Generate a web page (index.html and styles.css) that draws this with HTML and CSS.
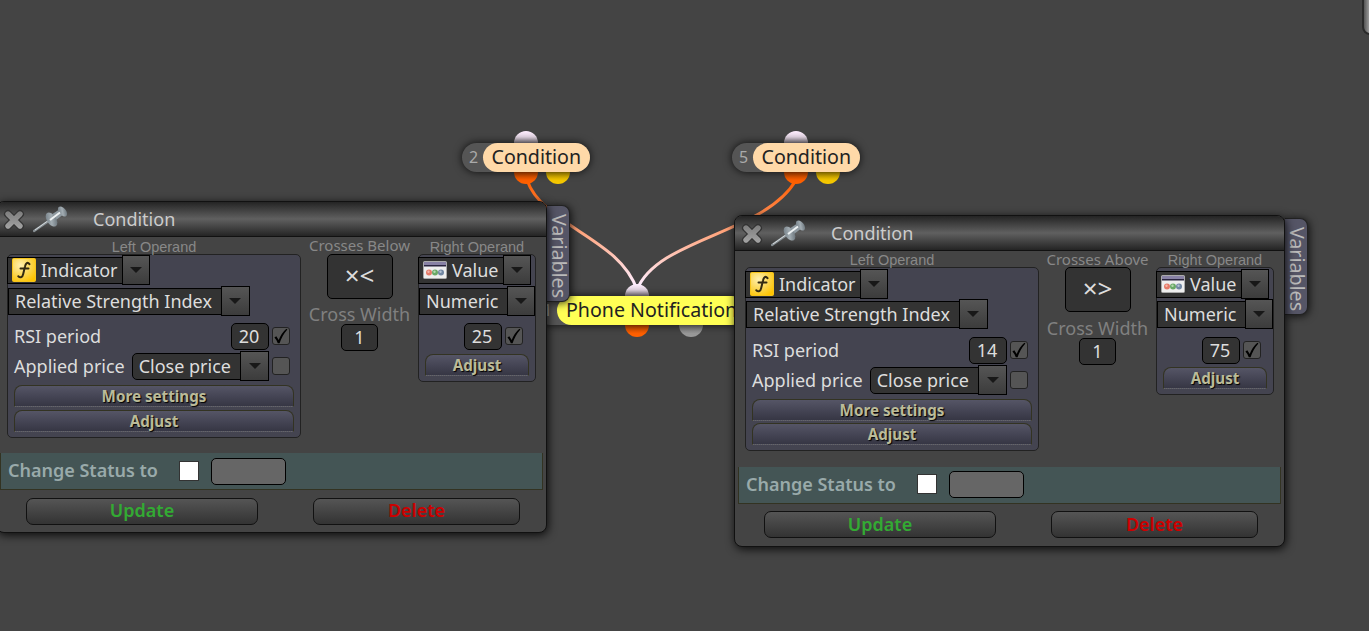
FILE: index.html
```html
<!DOCTYPE html>
<html>
<head>
    <meta charset="utf-8">
    <title>Conditions</title>
    <link rel="stylesheet" href="styles.css">
</head>
<body>
    <svg class="defs" width="0" height="0">
        <defs>
            <radialGradient id="yellow" cx=".35" cy=".3" r=".8">
                <stop offset="0" stop-color="#fff0b0"/>
                <stop offset=".55" stop-color="#fbd650"/>
                <stop offset="1" stop-color="#ffc400"/>
            </radialGradient>
            <linearGradient id="metal" x1="0" y1="0" x2="1" y2="1">
                <stop offset="0" stop-color="#69747c"/>
                <stop offset=".5" stop-color="#a2acb2"/>
                <stop offset="1" stop-color="#59636a"/>
            </linearGradient>
            <linearGradient id="cross" x1="0" y1="0" x2="0" y2="24" gradientUnits="userSpaceOnUse">
                <stop offset="0" stop-color="#777"/>
                <stop offset="1" stop-color="#aaa"/>
            </linearGradient>
            <symbol id="close" viewBox="0 0 24 24">
                <path d="M6 6L18 18M18 6L6 18" stroke="#333" stroke-width="8" stroke-linecap="round"/>
                <path d="M6 6L18 18M18 6L6 18" stroke="url(#cross)" stroke-width="5.4" stroke-linecap="round"/>
            </symbol>
            <symbol id="pin" viewBox="0 0 36 28">
                <path d="M1 26L17 15" stroke="#899196" stroke-width="2.2" stroke-linecap="round"/>
                <path d="M2 25L17 14.4" stroke="#d5dadc" stroke-width="1"/>
                <path d="M18 10L27 4L31 9L23 15Z" fill="#8f9aa1"/>
                <ellipse cx="18.5" cy="14.5" rx="4.6" ry="7.8" transform="rotate(-35 18.5 14.5)" fill="url(#metal)"/>
                <ellipse cx="29.5" cy="6.5" rx="3.4" ry="5.8" transform="rotate(-40 29.5 6.5)" fill="url(#metal)"/>
                <path d="M17 15L27 7.5" stroke="#eef2f3" stroke-width="2"/>
            </symbol>
            <symbol id="func" viewBox="0 0 24 24">
                <rect x=".5" y=".5" width="23" height="23" rx="1" fill="url(#yellow)" stroke="#f6c41c"/>
                <path d="M17.5 6.2C15.5 3.6 13.7 5.2 13 8.5L11.2 16C10.5 19.3 8.4 20.4 6.3 18.2M8.5 10.5H16.5" fill="none" stroke="#332a12" stroke-width="2" stroke-linecap="round"/>
            </symbol>
            <symbol id="value" viewBox="0 0 24 18">
                <rect x=".5" y=".5" width="23" height="17" rx="1" fill="#eee" stroke="#aaa"/>
                <rect x="1" y="1" width="22" height="3" fill="#8881a5"/>
                <rect x="1" y="4" width="22" height="1.5" fill="#2a2540"/>
                <circle cx="6" cy="11.5" r="3" fill="#e57a68"/>
                <circle cx="12" cy="11.5" r="3" fill="#69a866"/>
                <circle cx="18" cy="11.5" r="3" fill="#7187a3"/>
                <circle cx="5.5" cy="10.8" r="1.2" fill="#f5b5aa"/>
                <circle cx="11.5" cy="10.8" r="1.2" fill="#b4d8b0"/>
                <circle cx="17.5" cy="10.8" r="1.2" fill="#b5c3d4"/>
            </symbol>
            <symbol id="check" viewBox="0 0 16 16">
                <path d="M1.4 9.5L3.3 8.3L5.7 12Q8.5 5 13.4 .8L14.4 1.4Q9 7.5 6.6 15.3H4.8Q3.7 11.8 1.4 9.5Z" fill="#000"/>
            </symbol>
        </defs>
    </svg>

    <svg class="wires" width="1369" height="631">
        <defs>
            <linearGradient id="wire" gradientUnits="userSpaceOnUse" x1="0" y1="185" x2="0" y2="285">
                <stop offset="0" stop-color="#ff6208"/>
                <stop offset="1" stop-color="#ffeeff"/>
            </linearGradient>
        </defs>
        <path d="M527 180C543 226 620 238 637 290"/>
        <path d="M796 180C765 234 657 238 637 290"/>
    </svg>

    <div class="node node-left">
        <span class="ball top"></span><span class="ball out"></span><span class="ball out no"></span>
        <div class="pill"><span class="num">2</span><span class="name">Condition</span></div>
    </div>
    <div class="node node-right">
        <span class="ball top"></span><span class="ball out"></span><span class="ball out no"></span>
        <div class="pill"><span class="num">5</span><span class="name">Condition</span></div>
    </div>
    <div class="node node-phone">
        <span class="ball top"></span><span class="ball out"></span><span class="ball out off"></span>
        <div class="pill"><span class="num">1</span><span class="name">Phone Notification</span></div>
    </div>

    <div class="window window-left">
        <div class="tab">Variables</div>
        <div class="frame">
            <div class="header">
                <svg class="close"><use href="#close"/></svg>
                <svg class="pin"><use href="#pin"/></svg>
                <span>Condition</span>
            </div>
            <div class="operands">
                <div class="col left">
                    <div class="label">Left Operand</div>
                    <div class="box">
                        <div class="select kind"><span class="text"><svg class="func"><use href="#func"/></svg>Indicator</span><span class="arrow"></span></div>
                        <div class="select"><span class="text">Relative Strength Index</span><span class="arrow"></span></div>
                        <div class="row first"><span>RSI period</span><span class="input">20</span><span class="tick"><svg><use href="#check"/></svg></span></div>
                        <div class="row"><span>Applied price</span><div class="select price"><span class="text">Close price</span><span class="arrow"></span></div><span class="tick"></span></div>
                        <div class="bar more">More settings</div>
                        <div class="bar">Adjust</div>
                    </div>
                </div>
                <div class="col middle">
                    <div class="label">Crosses Below</div>
                    <div class="operator">×&lt;</div>
                    <div class="cross">Cross Width</div>
                    <span class="input">1</span>
                </div>
                <div class="col right">
                    <div class="label">Right Operand</div>
                    <div class="box">
                        <div class="select kind"><span class="text"><svg class="value"><use href="#value"/></svg>Value</span><span class="arrow"></span></div>
                        <div class="select"><span class="text">Numeric</span><span class="arrow"></span></div>
                        <div class="row first"><span class="input">25</span><span class="tick"><svg><use href="#check"/></svg></span></div>
                        <div class="bar">Adjust</div>
                    </div>
                </div>
            </div>
            <div class="status"><span class="caption">Change Status to</span><span class="white"></span><span class="field"></span></div>
            <div class="buttons"><div class="button update">Update</div><div class="button delete">Delete</div></div>
        </div>
    </div>

    <div class="window window-right">
        <div class="tab">Variables</div>
        <div class="frame">
            <div class="header">
                <svg class="close"><use href="#close"/></svg>
                <svg class="pin"><use href="#pin"/></svg>
                <span>Condition</span>
            </div>
            <div class="operands">
                <div class="col left">
                    <div class="label">Left Operand</div>
                    <div class="box">
                        <div class="select kind"><span class="text"><svg class="func"><use href="#func"/></svg>Indicator</span><span class="arrow"></span></div>
                        <div class="select"><span class="text">Relative Strength Index</span><span class="arrow"></span></div>
                        <div class="row first"><span>RSI period</span><span class="input">14</span><span class="tick"><svg><use href="#check"/></svg></span></div>
                        <div class="row"><span>Applied price</span><div class="select price"><span class="text">Close price</span><span class="arrow"></span></div><span class="tick"></span></div>
                        <div class="bar more">More settings</div>
                        <div class="bar">Adjust</div>
                    </div>
                </div>
                <div class="col middle">
                    <div class="label">Crosses Above</div>
                    <div class="operator">×&gt;</div>
                    <div class="cross">Cross Width</div>
                    <span class="input">1</span>
                </div>
                <div class="col right">
                    <div class="label">Right Operand</div>
                    <div class="box">
                        <div class="select kind"><span class="text"><svg class="value"><use href="#value"/></svg>Value</span><span class="arrow"></span></div>
                        <div class="select"><span class="text">Numeric</span><span class="arrow"></span></div>
                        <div class="row first"><span class="input">75</span><span class="tick"><svg><use href="#check"/></svg></span></div>
                        <div class="bar">Adjust</div>
                    </div>
                </div>
            </div>
            <div class="status"><span class="caption">Change Status to</span><span class="white"></span><span class="field"></span></div>
            <div class="buttons"><div class="button update">Update</div><div class="button delete">Delete</div></div>
        </div>
    </div>

    <div class="edge"></div>
</body>
</html>
```
FILE: styles.css
```css
* {
    box-sizing: border-box;
}

body {
    margin: 0;
    width: 1369px;
    height: 631px;
    position: relative;
    overflow: hidden;
    background-color: #444;
    color: #ddd;
    font-family: "Noto Sans", sans-serif;
    font-size: 18px;
}

.defs {
    position: absolute;
}

/* canvas */
.wires {
    position: absolute;
    left: 0;
    top: 0;
}

.wires path {
    fill: none;
    stroke: url(#wire);
    stroke-width: 3;
}

.node {
    position: absolute;
    height: 29px;
}

.node-left {
    left: 462px;
    top: 143px;
}

.node-right {
    left: 732px;
    top: 143px;
}

.node-phone {
    left: 536px;
    top: 296px;
}

.pill {
    position: relative;
    display: flex;
    height: 29px;
    border-radius: 15px;
    background: #555;
    box-shadow: 0 0 9px rgba(0, 0, 0, 0.8);
}

.num {
    width: 21px;
    padding-left: 7px;
    font-size: 16px;
    line-height: 28px;
    color: #aaa;
}

.name {
    height: 29px;
    padding: 0 8.5px;
    border-radius: 15px;
    background: #ffd9a8;
    color: #222;
    font-size: 19.6px;
    line-height: 28px;
    white-space: nowrap;
}

.node-phone .name {
    padding-left: 9px;
    background: #ffff55;
}

.ball {
    position: absolute;
    left: 52px;
    top: 17px;
    width: 24px;
    height: 24px;
    border-radius: 50%;
    background: linear-gradient(#ff6000 50%, #c44a00 50%, #ff6000 85%);
}

.ball.top {
    top: -12px;
    background: linear-gradient(#ffeeff, #e4d6e4 25%, #988e98 50%);
}

.ball.no {
    left: 84px;
    background: linear-gradient(#f5c800 50%, #c49e00 50%, #f5c800 85%);
}

.node-phone .ball {
    left: 89px;
}

.node-phone .ball.off {
    left: 143px;
    background: linear-gradient(#999 50%, #777 50%, #999 85%);
}

/* windows */
.window {
    position: absolute;
    width: 551px;
    height: 332px;
}

.window-left {
    left: -4px;
    top: 201px;
}

.window-right {
    left: 734px;
    top: 215px;
}

.frame {
    position: relative;
    height: 332px;
    border: 1px solid #111;
    border-radius: 8px;
    background: #444;
    box-shadow: 1px 2px 10px rgba(0, 0, 0, 0.85);
}

.tab {
    position: absolute;
    left: 551px;
    top: 4px;
    width: 23px;
    height: 97px;
    padding-top: 5px;
    border: 1px solid #222;
    border-left: none;
    border-radius: 0 8px 8px 0;
    background: #555566;
    box-shadow: 1px 1px 8px rgba(0, 0, 0, 0.8);
    writing-mode: vertical-rl;
    text-align: center;
    line-height: 20px;
    font-size: 19.6px;
    color: #bbb;
}

.window-right .tab {
    top: 3px;
}

.header {
    display: flex;
    align-items: center;
    height: 35px;
    border-bottom: 1px solid #111;
    border-radius: 7px 7px 0 0;
    background: linear-gradient(#242424, #606060 50%, #242424);
    color: #ccc;
}

.close {
    width: 24px;
    height: 24px;
    margin: 2px 0 0 5px;
}

.pin {
    width: 36px;
    height: 28px;
    margin: 0 24px 0 7px;
}

.operands {
    display: flex;
    height: 216px;
    padding: 3px 0 0 10px;
}

.window-right .operands {
    padding-top: 2px;
}

.label {
    height: 14px;
    line-height: 14px;
    font-family: "Liberation Sans", Arial, sans-serif;
    font-size: 14.5px;
    color: #888;
    text-align: center;
    white-space: nowrap;
}

.left {
    width: 294px;
}

.middle {
    display: flex;
    flex-direction: column;
    align-items: center;
    width: 117px;
}

.right {
    width: 118px;
}

.middle .label {
    font-family: "Noto Sans", sans-serif;
    font-size: 15px;
    line-height: 10px;
}

.window-right .middle .label {
    line-height: 12px;
}

.box {
    height: 184px;
    border: 1px solid #222;
    border-radius: 5px;
    background: #444450;
}

.right .box {
    height: 128px;
}

.select {
    display: flex;
    align-items: center;
    height: 30px;
}

.select.kind {
    margin: 0 0 1px -1px;
}

.window-right .select.kind {
    margin: 1px 0 0 -1px;
}

.text {
    display: flex;
    align-items: center;
    height: 27px;
    padding: 0 8px 0 6px;
    border: 1px solid #000;
    background: #333;
    white-space: nowrap;
}

.left .text {
    padding-right: 9px;
}

.left .kind .text {
    padding: 0 4px 0 4px;
}

.right .kind .text {
    padding: 0 5px 0 4px;
}

.arrow {
    width: 29px;
    height: 30px;
    margin-left: -1px;
    border: 1px solid #000;
    background: linear-gradient(#555, #3c3c3c);
    display: flex;
    align-items: center;
    justify-content: center;
}

.kind .arrow {
    width: 28px;
}

.arrow::after {
    content: "";
    border: 6px solid transparent;
    border-top-color: #181818;
    border-bottom: none;
}

.func {
    width: 24px;
    height: 24px;
    margin-right: 5px;
}

.value {
    width: 24px;
    height: 18px;
    margin-right: 5px;
}

.row {
    display: flex;
    align-items: center;
    justify-content: space-between;
    height: 30px;
    padding: 0 10px 0 6px;
}

.row.first {
    margin-top: 5px;
}

.window-right .row.first {
    margin-top: 6px;
}

.left .row .input {
    margin-left: auto;
}

.input {
    width: 38px;
    height: 27px;
    padding-right: 2px;
    border: 1px solid #000;
    border-radius: 5px;
    background: #333;
    text-align: center;
    line-height: 25px;
}

.tick {
    width: 18px;
    height: 18px;
    margin-left: 3px;
    border: 1px solid #222;
    border-radius: 3px;
    background: #555;
}

.tick svg {
    display: block;
    width: 16px;
    height: 16px;
}

.price {
    margin-left: auto;
}

.price .text {
    border-radius: 5px 0 0 5px;
}

.bar {
    height: 22px;
    margin: 3px 6px 0;
    border: 1px solid #333322;
    border-bottom: 1px dotted #666;
    border-radius: 8px 8px 0 0;
    background: linear-gradient(#555566, #363644);
    color: #bbbb99;
    font-family: "Noto Sans", sans-serif;
    font-size: 15.2px;
    font-weight: bold;
    line-height: 20px;
    text-align: center;
    text-shadow: 1px 1px 1px #000;
}

.bar.more {
    margin-top: 4px;
}

.window-right .bar {
    margin-top: 2px;
}

.window-right .bar.more {
    margin-top: 4px;
}

.right .row {
    justify-content: flex-end;
    padding-right: 12px;
}

.operator {
    width: 66px;
    height: 45px;
    border: 1px solid #000;
    border-radius: 5px;
    background: #333;
    font-size: 26px;
    line-height: 41px;
    text-align: center;
}

.cross {
    height: 25px;
    line-height: 30px;
    color: #808080;
}

.window-right .cross {
    line-height: 32px;
}

.middle .input {
    width: 37px;
    padding-right: 0;
}

.window-right .middle .input {
    margin-top: 1px;
}

.status {
    display: flex;
    align-items: center;
    width: 543px;
    height: 37px;
    margin-left: 3px;
    padding-left: 7px;
    border: 1px solid #333322;
    border-top: none;
    background: #445555;
    color: #99aaaa;
    font-weight: 600;
}

.caption {
    padding-bottom: 2px;
}

.white {
    width: 20px;
    height: 20px;
    margin-left: 21px;
    border: 1px solid #333;
    background: #fff;
}

.field {
    width: 75px;
    height: 27px;
    margin-left: 12px;
    border: 1px solid #000;
    border-radius: 5px;
    background: #666;
}

.window-right .white,
.window-right .field {
    margin-bottom: 2px;
}

.buttons {
    display: flex;
    gap: 55px;
    padding: 8px 0 0 29px;
}

.window-right .buttons {
    padding-top: 7px;
}

.button {
    width: 232px;
    height: 27px;
    border: 1px solid #111;
    border-radius: 7px;
    background: linear-gradient(#555, #333);
    color: #33aa33;
    font-weight: 600;
    line-height: 23px;
    text-align: center;
}

.window-right .button {
    line-height: 25px;
}

.button.delete {
    width: 207px;
    color: #cc0000;
}

/* corner of the side panel */
.edge {
    position: absolute;
    left: 1362px;
    top: -10px;
    width: 30px;
    height: 45px;
    border: 2px solid #2a2a2a;
    border-radius: 8px;
    background: linear-gradient(90deg, #555, #999 5px);
}
```
